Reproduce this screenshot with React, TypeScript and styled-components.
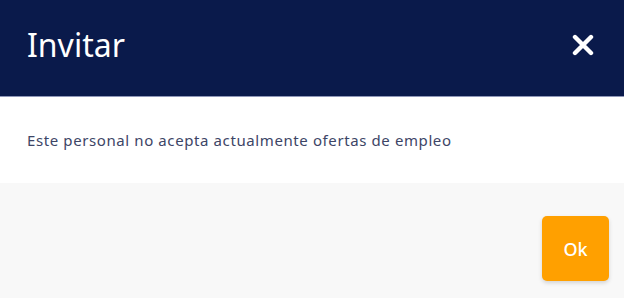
import React from 'react';
import styled, { createGlobalStyle } from 'styled-components';

const GlobalStyle = createGlobalStyle`
  html, body {
    margin: 0;
    padding: 0;
    background: #f8f8f8;
  }
  body {
    font-family: 'Noto Sans', sans-serif;
  }
`;

const Dialog = styled.div`
  width: 624px;
  height: 298px;
  display: flex;
  flex-direction: column;
  background: #f8f8f8;
`;

const Header = styled.header`
  height: 97px;
  flex-shrink: 0;
  background: #0a1a4b;
  border-bottom: 1px solid #8f97b8;
  display: flex;
  align-items: center;
  justify-content: space-between;
  padding: 0 29px 6px 27px;
  box-sizing: border-box;
`;

const Title = styled.h1`
  margin: 0;
  font-family: 'Noto Sans', sans-serif;
  font-size: 32px;
  line-height: 40px;
  font-weight: 400;
  color: #ffffff;
`;

const CloseButton = styled.button`
  border: 0;
  background: transparent;
  padding: 0;
  width: 24px;
  height: 24px;
  display: flex;
  align-items: center;
  justify-content: center;
  cursor: pointer;
`;

const Body = styled.div`
  height: 86px;
  flex-shrink: 0;
  background: #ffffff;
  display: flex;
  align-items: center;
  padding: 0 27px;
  box-sizing: border-box;
`;

const Message = styled.p`
  margin: 0;
  font-family: 'Noto Sans', sans-serif;
  font-size: 15px;
  letter-spacing: 0.6px;
  color: #3d4566;
`;

const Footer = styled.footer`
  flex: 1;
  display: flex;
  justify-content: flex-end;
  align-items: flex-start;
  padding: 33px 15px 0 0;
`;

const OkButton = styled.button`
  width: 67px;
  height: 65px;
  border: 0;
  border-radius: 5px;
  background: #ffa000;
  color: #ffffff;
  font-family: 'Noto Sans', sans-serif;
  font-size: 18px;
  font-weight: 500;
  box-shadow: 0 2px 4px rgba(0, 0, 0, 0.15);
  cursor: pointer;
`;

export default function App() {
  return (
    <>
      <GlobalStyle />
      <Dialog>
        <Header>
          <Title>Invitar</Title>
          <CloseButton aria-label="Cerrar">
            <svg width="22" height="22" viewBox="0 0 22 22">
              <path
                d="M3 3 L19 19 M19 3 L3 19"
                stroke="#ffffff"
                strokeWidth="4.4"
                strokeLinecap="round"
              />
            </svg>
          </CloseButton>
        </Header>
        <Body>
          <Message>Este personal no acepta actualmente ofertas de empleo</Message>
        </Body>
        <Footer>
          <OkButton>Ok</OkButton>
        </Footer>
      </Dialog>
    </>
  );
}
